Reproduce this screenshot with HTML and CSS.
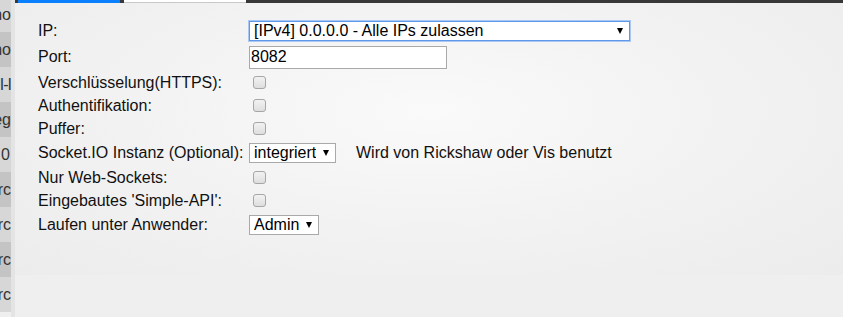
FILE: index.html
```html
<!DOCTYPE html>
<html lang="de">
<head>
    <meta charset="UTF-8">
    <meta name="viewport" content="width=device-width, initial-scale=1.0">
    <title>Web-Adapter Einstellungen</title>
    <link rel="stylesheet" href="styles.css">
</head>
<body>
    <div class="shell">
        <div class="sidebar">
            <div class="side-row"><span>Mono</span></div>
            <div class="side-row"><span>Mono</span></div>
            <div class="side-row"><span class="tight">UI-I</span></div>
            <div class="side-row"><span>Reg</span></div>
            <div class="side-row"><span class="pad">0</span></div>
            <div class="side-row"><span>src</span></div>
            <div class="side-row"><span>src</span></div>
            <div class="side-row"><span>src</span></div>
            <div class="side-row"><span>src</span></div>
        </div>
        <div class="gutter"></div>
        <div class="main">
            <div class="tabs">
                <span class="tab tab-active"></span>
                <span class="tab"></span>
            </div>
            <div class="panel">
                <table class="settings">
                    <tr class="row-select">
                        <td class="label">IP:</td>
                        <td>
                            <span class="select-wrap">
                                <select id="bind" class="field-ip focused">
                                    <option>[IPv4] 0.0.0.0 - Alle IPs zulassen</option>
                                    <option>[IPv4] 127.0.0.1 - localhost</option>
                                </select>
                            </span>
                        </td>
                    </tr>
                    <tr class="row-input">
                        <td class="label">Port:</td>
                        <td><input type="text" id="port" class="field-port" value="8082"></td>
                    </tr>
                    <tr>
                        <td class="label">Verschlüsselung(HTTPS):</td>
                        <td><input type="checkbox" id="secure"></td>
                    </tr>
                    <tr>
                        <td class="label">Authentifikation:</td>
                        <td><input type="checkbox" id="auth"></td>
                    </tr>
                    <tr>
                        <td class="label">Puffer:</td>
                        <td><input type="checkbox" id="cache"></td>
                    </tr>
                    <tr class="row-socket">
                        <td class="label">Socket.IO Instanz (Optional):</td>
                        <td class="inline-cell">
                            <span class="select-wrap">
                                <select id="socketio" class="field-socket">
                                    <option>integriert</option>
                                    <option>keins</option>
                                </select>
                            </span>
                            <span class="hint">Wird von Rickshaw oder Vis benutzt</span>
                        </td>
                    </tr>
                    <tr>
                        <td class="label">Nur Web-Sockets:</td>
                        <td><input type="checkbox" id="forceWebSockets"></td>
                    </tr>
                    <tr>
                        <td class="label">Eingebautes 'Simple-API':</td>
                        <td><input type="checkbox" id="simpleapi"></td>
                    </tr>
                    <tr class="row-last">
                        <td class="label">Laufen unter Anwender:</td>
                        <td>
                            <span class="select-wrap">
                                <select id="defaultUser" class="field-user">
                                    <option>Admin</option>
                                </select>
                            </span>
                        </td>
                    </tr>
                </table>
            </div>
        </div>
    </div>
</body>
</html>
```

FILE: styles.css
```css
body {
    margin: 0;
    padding: 0;
    font-family: "Liberation Sans", Arial, sans-serif;
    font-size: 16px;
    color: #111;
    background-color: #efefef;
    overflow: hidden;
}

.shell {
    display: flex;
    height: 317px;
}

/* left list, mostly scrolled out of view */
.sidebar {
    width: 11px;
    overflow: hidden;
    margin-top: -3px;
}

.side-row {
    height: 35px;
    display: flex;
    align-items: center;
    justify-content: flex-end;
    white-space: nowrap;
    color: #333;
    background-color: #d7d7d7;
}

.side-row:nth-child(even) {
    background-color: #c4c4c4;
}

.side-row .tight {
    letter-spacing: -1px;
}

.side-row .pad {
    padding-right: 1px;
}

.gutter {
    width: 4px;
    background-color: #e4e4e4;
}

.main {
    flex: 1;
    background-color: #efefef;
}

.tabs {
    display: flex;
    gap: 4px;
    height: 3px;
    padding-left: 3px;
    background-color: #383838;
}

.tab {
    width: 122px;
    background-color: #fff;
    border-bottom: 1px solid #c8c8c8;
    box-sizing: border-box;
}

.tab-active {
    width: 102px;
    background-color: #0a80ff;
    border-bottom: none;
}

.panel {
    height: 272px;
    background: radial-gradient(ellipse at 50% 40%, #fafafa 0%, #f3f3f3 45%, #ececec 100%);
    overflow: hidden;
}

.settings {
    border-collapse: collapse;
    margin: 16px 0 0 23px;
}

.settings td {
    padding: 0;
    height: 23px;
    vertical-align: middle;
    white-space: nowrap;
}

.settings td.label {
    width: 211px;
}

.settings .row-select td {
    height: 24px;
}

.settings .row-input td {
    height: 28px;
}

.settings .row-socket td {
    height: 26px;
}

.settings .row-last td {
    height: 25px;
}

.inline-cell {
    display: flex;
    align-items: center;
    gap: 20px;
}

.select-wrap {
    position: relative;
    display: inline-block;
    vertical-align: middle;
}

.select-wrap::after {
    content: "";
    position: absolute;
    right: 7px;
    top: 7px;
    border-left: 3px solid transparent;
    border-right: 3px solid transparent;
    border-top: 6px solid #000;
    pointer-events: none;
}

select {
    -webkit-appearance: none;
    appearance: none;
    display: block;
    height: 20px;
    margin: 0;
    padding: 0 19px 0 4px;
    font-family: "Liberation Sans", Arial, sans-serif;
    font-size: 16px;
    line-height: 18px;
    color: #000;
    background-color: #fff;
    border: 1px solid #a9a9a9;
    border-radius: 0;
    box-sizing: border-box;
}

.field-ip {
    width: 381px;
}

.field-socket {
    width: 87px;
}

.field-user {
    width: 70px;
}

select.focused {
    border-color: #5e98ea;
    box-shadow: 0 0 0 1px #a9c8f4;
    outline: none;
}

.field-port {
    display: block;
    width: 198px;
    height: 23px;
    margin: 0;
    padding: 0 1px;
    font-family: "Liberation Sans", Arial, sans-serif;
    font-size: 16px;
    color: #000;
    background-color: #fff;
    border: 1px solid #a9a9a9;
    border-radius: 0;
    box-sizing: border-box;
}

input[type="checkbox"] {
    -webkit-appearance: none;
    appearance: none;
    display: block;
    width: 13px;
    height: 13px;
    margin: 0 0 0 4px;
    background: linear-gradient(#f2f2f2, #dedede);
    border: 1px solid #a6a6a6;
    border-radius: 3px;
    box-sizing: border-box;
}

.hint {
    display: inline-block;
}
```
